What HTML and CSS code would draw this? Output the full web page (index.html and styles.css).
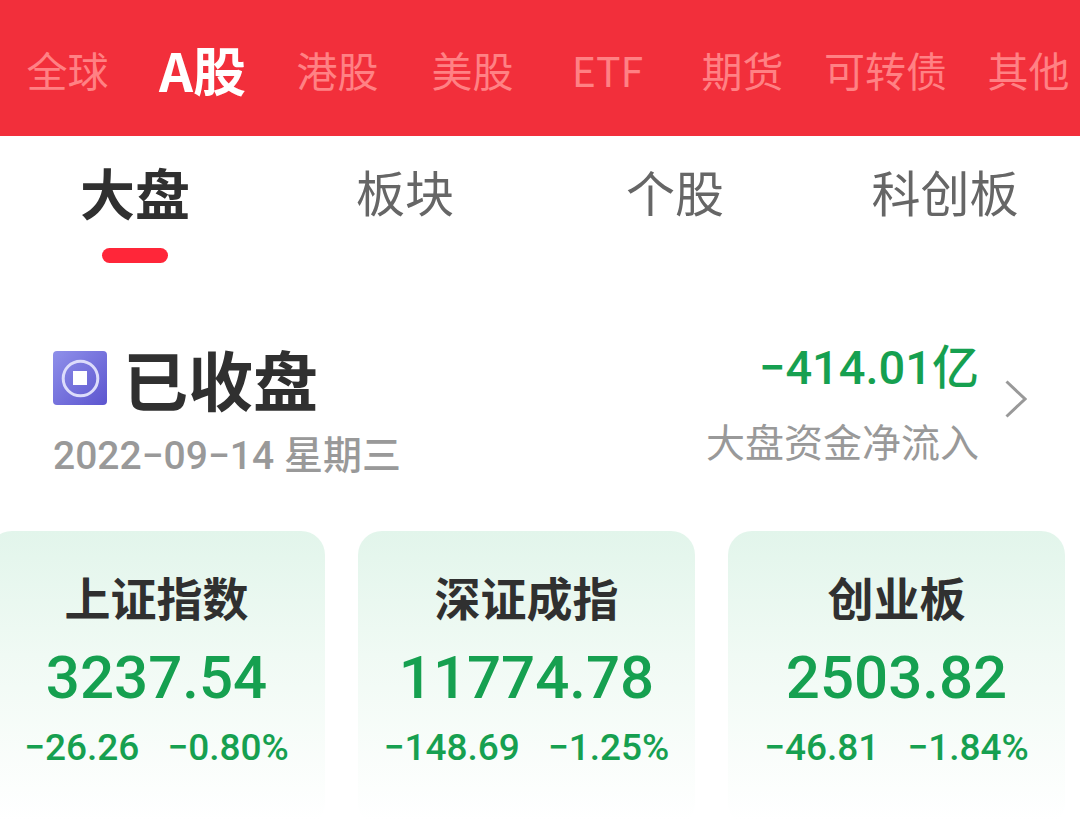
FILE: index.html
```html
<!DOCTYPE html>
<html lang="zh-CN">

<head>
    <meta charset="UTF-8">
    <meta name="viewport" content="width=device-width, initial-scale=1.0">
    <title>A股行情</title>
    <link rel="stylesheet" href="styles.css">
</head>

<body>
    <header>
        <nav class="markets">
            <a href="#global">全球</a>
            <a href="#a" class="active">A股</a>
            <a href="#hk">港股</a>
            <a href="#us">美股</a>
            <a href="#etf">ETF</a>
            <a href="#futures">期货</a>
            <a href="#bonds">可转债</a>
            <a href="#other">其他</a>
        </nav>
    </header>
    <nav class="sections">
        <a href="#market" class="active">大盘</a>
        <a href="#sectors">板块</a>
        <a href="#stocks">个股</a>
        <a href="#star">科创板</a>
    </nav>
    <main>
        <section class="summary">
            <div class="status">
                <h1>
                    <svg class="status-icon" viewBox="0 0 54 54" aria-hidden="true">
                        <defs>
                            <linearGradient id="badge" x1="0" y1="0" x2="1" y2="1">
                                <stop offset="0" stop-color="#8f90ea" />
                                <stop offset="1" stop-color="#5c55cf" />
                            </linearGradient>
                        </defs>
                        <rect width="54" height="54" rx="4" fill="url(#badge)" />
                        <circle cx="27.5" cy="27.5" r="17.3" fill="none" stroke="#dcdcfb" stroke-width="3" />
                        <rect x="20" y="20" width="14" height="14" fill="#fff" />
                    </svg>
                    已收盘
                </h1>
                <p class="date">2022−09−14 星期三</p>
            </div>
            <a href="#flow" class="flow">
                <span class="flow-text">
                    <strong>−414.01亿</strong>
                    <span>大盘资金净流入</span>
                </span>
                <svg class="chevron" viewBox="0 0 22 38" aria-hidden="true">
                    <path d="M1.5 1.5 L20 19 L1.5 36.5" fill="none" stroke="#999" stroke-width="3" />
                </svg>
            </a>
        </section>
        <section class="indexes">
            <article class="card">
                <h2>上证指数</h2>
                <p class="value">3237.54</p>
                <p class="change"><span>−26.26</span><span>−0.80%</span></p>
            </article>
            <article class="card">
                <h2>深证成指</h2>
                <p class="value">11774.78</p>
                <p class="change"><span>−148.69</span><span>−1.25%</span></p>
            </article>
            <article class="card">
                <h2>创业板</h2>
                <p class="value">2503.82</p>
                <p class="change"><span>−46.81</span><span>−1.84%</span></p>
            </article>
        </section>
    </main>
</body>

</html>
```
FILE: styles.css
```css
/* General styles */

* {
    box-sizing: border-box;
}

body {
    margin: 0;
    background-color: #fff;
    color: #303030;
    font-family: "Noto Sans CJK SC", sans-serif;
    overflow-x: hidden;
}

h1,
h2,
p {
    margin: 0;
}

a {
    color: inherit;
    text-decoration: none;
}

/* Market tabs */

header {
    padding: 29px 0 27px;
    background-color: #f22f3b;
}

.markets {
    display: flex;
    color: #ff8184;
    font-size: 41px;
    line-height: 80px;
    white-space: nowrap;
}

.markets a {
    flex: none;
    min-width: 12.5%;
    padding: 0 14px;
    text-align: center;
}

.markets .active {
    color: #fff;
    font-size: 53px;
    font-weight: 700;
}

/* Section tabs */

.sections {
    display: grid;
    grid-template-columns: repeat(4, 1fr);
    padding-top: 20px;
    color: #666;
    font-size: 49px;
    line-height: 70px;
    text-align: center;
}

.sections .active {
    color: #303030;
    font-size: 55px;
    font-weight: 700;
}

.sections .active::after {
    content: "";
    display: block;
    width: 66px;
    height: 15px;
    margin: 22px auto 0;
    border-radius: 8px;
    background-color: #ff2639;
}

/* Market status */

.summary {
    display: flex;
    justify-content: space-between;
    padding: 69px 53px 0;
}

h1 {
    display: flex;
    align-items: center;
    gap: 16px;
    font-size: 65px;
    line-height: 92px;
}

.status-icon {
    width: 54px;
    height: 54px;
}

.date {
    color: #999;
    font-family: Roboto, "Noto Sans CJK SC", sans-serif;
    font-size: 39px;
    font-weight: 500;
    line-height: 64px;
}

.flow {
    display: flex;
    align-items: flex-start;
    gap: 26px;
    color: #999;
    font-size: 39px;
    text-align: right;
}

.flow-text {
    display: flex;
    flex-direction: column;
    line-height: 72px;
}

.flow strong {
    color: #16a050;
    font-family: Roboto, "Noto Sans CJK SC", sans-serif;
    font-size: 47px;
    font-weight: 500;
}

.chevron {
    width: 22px;
    height: 38px;
    margin-top: 48px;
}

/* Index cards, the first one runs off the left edge */

.indexes {
    display: grid;
    grid-template-columns: repeat(3, 1fr);
    gap: 33px;
    margin: 43px 15px 0 -12px;
}

.card {
    padding: 36px 0 54px;
    border-radius: 24px;
    background-image: linear-gradient(#e2f5eb, #f0faf4 42%, #fff 98%);
    color: #16a050;
    font-family: Roboto, "Noto Sans CJK SC", sans-serif;
    font-weight: 500;
    text-align: center;
    white-space: nowrap;
}

.card h2 {
    color: #303030;
    font-size: 46px;
    line-height: 66px;
}

.value {
    font-size: 60px;
    line-height: 90px;
}

.change {
    display: flex;
    justify-content: center;
    gap: 28px;
    font-size: 37px;
    line-height: 50px;
}
```
